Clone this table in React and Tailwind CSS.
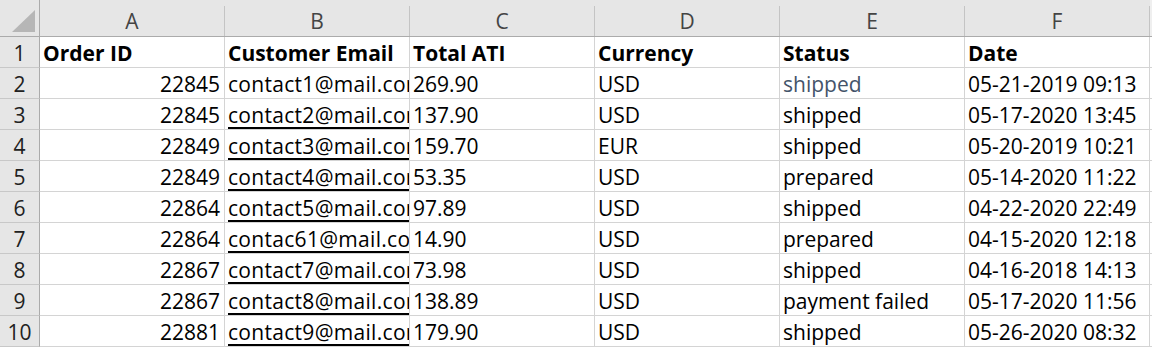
import React from "react";

const columns = ["A", "B", "C", "D", "E", "F"];

const headers = ["Order ID", "Customer Email", "Total ATI", "Currency", "Status", "Date"];

const orders = [
  { id: 22845, email: "contact1@mail.com", total: "269.90", currency: "USD", status: "shipped", date: "05-21-2019 09:13", plain: true },
  { id: 22845, email: "contact2@mail.com", total: "137.90", currency: "USD", status: "shipped", date: "05-17-2020 13:45" },
  { id: 22849, email: "contact3@mail.com", total: "159.70", currency: "EUR", status: "shipped", date: "05-20-2019 10:21" },
  { id: 22849, email: "contact4@mail.com", total: "53.35", currency: "USD", status: "prepared", date: "05-14-2020 11:22" },
  { id: 22864, email: "contact5@mail.com", total: "97.89", currency: "USD", status: "shipped", date: "04-22-2020 22:49" },
  { id: 22864, email: "contac61@mail.com", total: "14.90", currency: "USD", status: "prepared", date: "04-15-2020 12:18" },
  { id: 22867, email: "contact7@mail.com", total: "73.98", currency: "USD", status: "shipped", date: "04-16-2018 14:13" },
  { id: 22867, email: "contact8@mail.com", total: "138.89", currency: "USD", status: "payment failed", date: "05-17-2020 11:56" },
  { id: 22881, email: "contact9@mail.com", total: "179.90", currency: "USD", status: "shipped", date: "05-26-2020 08:32" },
];

const cell =
  "w-[185px] shrink-0 h-full flex items-center px-[3px] pt-[2px] border-r border-b border-[#d4d4d4] overflow-hidden whitespace-nowrap";

const RowHead = ({ n }) => (
  <div className="w-[40px] shrink-0 h-full flex items-center justify-center pt-[2px] bg-[#e6e6e6] border-r border-r-[#ababab] border-b border-b-[#c8c8c8] text-[#212121]">
    {n}
  </div>
);

const App = () => {
  return (
    <div className="w-[1152px] h-[348px] bg-white overflow-hidden font-['Open_Sans',sans-serif] text-[21px] text-black leading-none">
      {/* column letters */}
      <div className="flex h-[37px] bg-[#e6e6e6] border-b border-[#ababab]">
        <div className="w-[40px] shrink-0 h-full border-r border-[#ababab] flex items-end justify-end pr-[3px] pb-[3px]">
          <svg width="24" height="23" viewBox="0 0 24 23">
            <polygon points="0,22 23,22 23,0" fill="#b6b6b6" />
          </svg>
        </div>
        {columns.map((c) => (
          <div key={c} className="w-[185px] shrink-0 h-full flex flex-col">
            <div className="h-[6px]" />
            <div className="flex-1 flex items-center justify-center border-r border-[#c4c4c4] text-[#444444]">
              {c}
            </div>
          </div>
        ))}
        <div className="flex-1 bg-[#efefef]" />
      </div>

      {/* header row */}
      <div className="flex h-[31px]">
        <RowHead n={1} />
        {headers.map((h) => (
          <div key={h} className={cell + " font-bold"}>
            {h}
          </div>
        ))}
        <div className="flex-1 border-b border-[#d4d4d4]" />
      </div>

      {orders.map((o, i) => (
        <div key={i} className="flex h-[31px]">
          <RowHead n={i + 2} />
          <div className={cell + " justify-end pr-[4px]"}>{o.id}</div>
          <div className={cell + " tracking-[0.3px]"}>
            <span
              className={
                o.plain
                  ? ""
                  : "underline decoration-[1.5px] underline-offset-[4px]"
              }
            >
              {o.email}
            </span>
          </div>
          <div className={cell}>{o.total}</div>
          <div className={cell}>{o.currency}</div>
          <div className={cell + (o.plain ? " text-[#44546a]" : "")}>{o.status}</div>
          <div className={cell}>{o.date}</div>
          <div className="flex-1 border-b border-[#d4d4d4]" />
        </div>
      ))}
    </div>
  );
};

export default App;
